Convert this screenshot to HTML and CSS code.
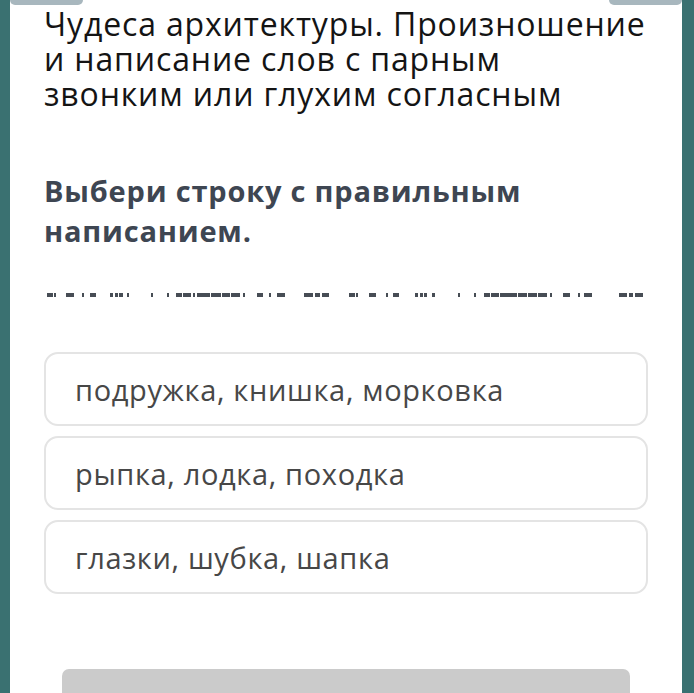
FILE: index.html
```html
<!DOCTYPE html>
<html lang="ru">
<head>
  <meta charset="UTF-8">
  <meta name="viewport" content="width=device-width, initial-scale=1.0">
  <title>Чудеса архитектуры</title>
  <link rel="stylesheet" href="styles.css">
</head>
<body>
<div class="card">
  <div class="topbar">
    <span class="tab"></span>
    <span class="tab"></span>
  </div>

  <h1 class="title">Чудеса архитектуры. Произношение и написание слов с парным звонким или глухим согласным</h1>

  <p class="question">Выбери строку с правильным написанием.</p>

  <svg class="scribble" width="604" height="4" viewBox="0 0 604 4">
    <g fill="#474d55">
      <rect x="3" y="0" width="6" height="4"/>
      <rect x="10" y="0" width="2" height="4"/>
      <rect x="22" y="0" width="8" height="4"/>
      <rect x="38" y="0" width="2" height="4"/>
      <rect x="46" y="0" width="6" height="4"/>
      <rect x="66" y="0" width="3" height="4"/>
      <rect x="71" y="0" width="3" height="4"/>
      <rect x="75" y="0" width="4" height="4"/>
      <rect x="83" y="0" width="2" height="4"/>
      <rect x="107" y="0" width="2" height="4"/>
      <rect x="123" y="0" width="2" height="4"/>
      <rect x="132" y="0" width="6" height="4"/>
      <rect x="139" y="0" width="8" height="4"/>
      <rect x="149" y="0" width="2" height="4"/>
      <rect x="153" y="0" width="13" height="4"/>
      <rect x="167" y="0" width="10" height="4"/>
      <rect x="178" y="0" width="8" height="4"/>
      <rect x="187" y="0" width="9" height="4"/>
      <rect x="199" y="0" width="2" height="4"/>
      <rect x="213" y="0" width="6" height="4"/>
      <rect x="225" y="0" width="2" height="4"/>
      <rect x="233" y="0" width="8" height="4"/>
      <rect x="260" y="0" width="9" height="4"/>
      <rect x="271" y="0" width="5" height="4"/>
      <rect x="278" y="0" width="7" height="4"/>

      <rect x="305" y="0" width="6" height="4"/>
      <rect x="312" y="0" width="2" height="4"/>
      <rect x="325" y="0" width="7" height="4"/>
      <rect x="342" y="0" width="2" height="4"/>
      <rect x="349" y="0" width="6" height="4"/>
      <rect x="371" y="0" width="3" height="4"/>
      <rect x="376" y="0" width="3" height="4"/>
      <rect x="380" y="0" width="3" height="4"/>
      <rect x="388" y="0" width="3" height="4"/>
      <rect x="414" y="0" width="2" height="4"/>
      <rect x="430" y="0" width="2" height="4"/>
      <rect x="440" y="0" width="6" height="4"/>
      <rect x="447" y="0" width="8" height="4"/>
      <rect x="456" y="0" width="3" height="4"/>
      <rect x="459" y="0" width="14" height="4"/>
      <rect x="474" y="0" width="9" height="4"/>
      <rect x="484" y="0" width="9" height="4"/>
      <rect x="494" y="0" width="9" height="4"/>
      <rect x="506" y="0" width="2" height="4"/>
      <rect x="519" y="0" width="7" height="4"/>
      <rect x="534" y="0" width="2" height="4"/>
      <rect x="540" y="0" width="8" height="4"/>
      <rect x="575" y="0" width="8" height="4"/>
      <rect x="585" y="0" width="4" height="4"/>
      <rect x="591" y="0" width="8" height="4"/>
    </g>
  </svg>

  <div class="options">
    <div class="option">подружка, книшка, морковка</div>
    <div class="option">рыпка, лодка, походка</div>
    <div class="option">глазки, шубка, шапка</div>
  </div>

  <div class="submit"></div>
</div>
</body>
</html>
```

FILE: styles.css
```css
body {
    margin: 0;
    background-color: #3a7171;
    font-family: "Open Sans", "Noto Sans", sans-serif;
    overflow: hidden;
}
.card {
    margin: 0 12px 0 10px;
    padding: 0 34px;
    background-color: #fff;
    height: 693px;
    overflow: hidden;
}
.topbar {
    display: flex;
    justify-content: space-between;
    margin: 0 -34px;
}
.tab {
    width: 73px;
    height: 5px;
    background-color: #a8b7be;
    border-radius: 0 0 7px 7px;
}
.title {
    margin: 1px 0 0;
    font-size: 32px;
    font-weight: 400;
    letter-spacing: 0.85px;
    line-height: 35px;
    color: #141414;
}
.question {
    margin: 60px 0 0;
    font-size: 29px;
    font-weight: 700;
    letter-spacing: 0.8px;
    line-height: 40px;
    color: #3e4652;
}
.scribble {
    display: block;
    margin-top: 42px;
}
.options {
    display: flex;
    flex-direction: column;
    gap: 10px;
    margin-top: 55px;
}
.option {
    display: flex;
    align-items: center;
    height: 70px;
    padding-left: 29px;
    border: 2px solid #e4e4e4;
    border-radius: 14px;
    font-size: 29px;
    letter-spacing: 0.65px;
    color: #474747;
}
.submit {
    margin: 75px 18px 0;
    height: 60px;
    background-color: #cbcbcb;
    border-radius: 7px 7px 0 0;
}
```
